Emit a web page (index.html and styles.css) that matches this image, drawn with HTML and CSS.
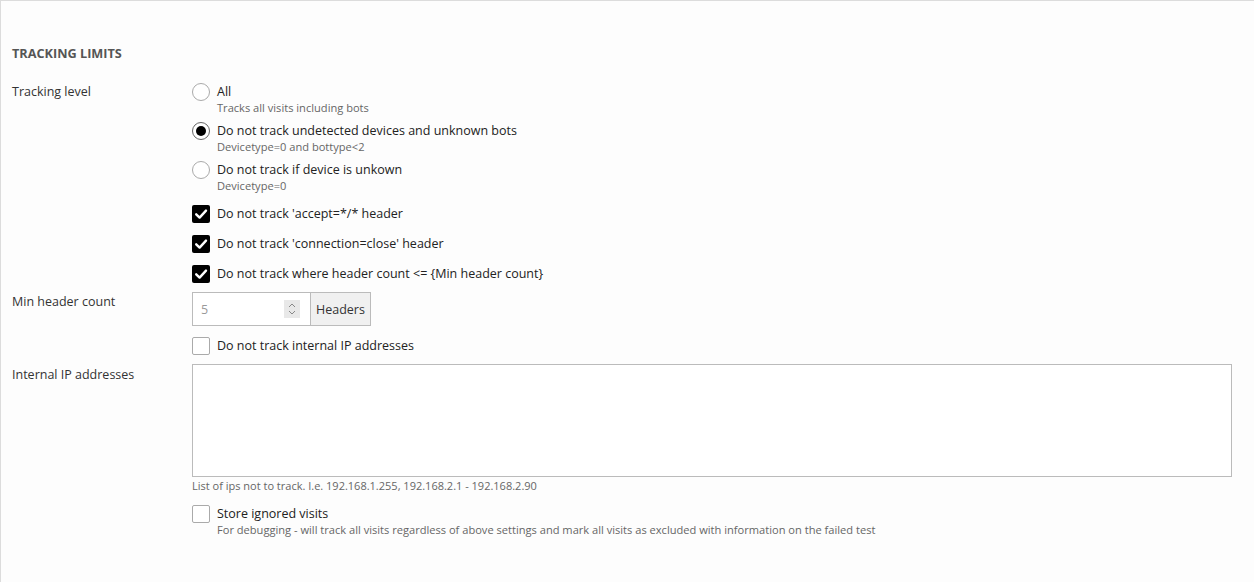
FILE: index.html
```html
<!DOCTYPE html>
<html>
<head>
<meta charset="utf-8">
<link rel="stylesheet" href="styles.css">
</head>
<body>
<div class="panel">
  <h2 class="section-title">TRACKING LIMITS</h2>

  <div class="row">
    <div class="label">Tracking level</div>
    <div class="control">
      <div class="opt radio-opt">
        <span class="radio"></span>
        <div class="opt-text">
          <div class="opt-label">All</div>
          <div class="desc">Tracks all visits including bots</div>
        </div>
      </div>
      <div class="opt radio-opt">
        <span class="radio checked"></span>
        <div class="opt-text">
          <div class="opt-label">Do not track undetected devices and unknown bots</div>
          <div class="desc">Devicetype=0 and bottype&lt;2</div>
        </div>
      </div>
      <div class="opt radio-opt">
        <span class="radio"></span>
        <div class="opt-text">
          <div class="opt-label">Do not track if device is unkown</div>
          <div class="desc">Devicetype=0</div>
        </div>
      </div>
      <div class="opt check-opt first-check">
        <span class="check checked"><svg viewBox="0 0 18 18" width="18" height="18"><path d="M4.2 9.3 L7.6 12.6 L14 5.6" fill="none" stroke="#fff" stroke-width="2.4" stroke-linecap="round" stroke-linejoin="round"/></svg></span>
        <div class="opt-label">Do not track 'accept=*/* header</div>
      </div>
      <div class="opt check-opt">
        <span class="check checked"><svg viewBox="0 0 18 18" width="18" height="18"><path d="M4.2 9.3 L7.6 12.6 L14 5.6" fill="none" stroke="#fff" stroke-width="2.4" stroke-linecap="round" stroke-linejoin="round"/></svg></span>
        <div class="opt-label">Do not track 'connection=close' header</div>
      </div>
      <div class="opt check-opt last-check">
        <span class="check checked"><svg viewBox="0 0 18 18" width="18" height="18"><path d="M4.2 9.3 L7.6 12.6 L14 5.6" fill="none" stroke="#fff" stroke-width="2.4" stroke-linecap="round" stroke-linejoin="round"/></svg></span>
        <div class="opt-label">Do not track where header count &lt;= {Min header count}</div>
      </div>
    </div>
  </div>

  <div class="row row-min">
    <div class="label">Min header count</div>
    <div class="control">
      <div class="input-group">
        <div class="num-input">
          <span class="num-value">5</span>
          <span class="spinner"><svg viewBox="0 0 16 18" width="16" height="18"><path d="M5 7 L8 4 L11 7" fill="none" stroke="#888" stroke-width="1"/><path d="M5 11 L8 14 L11 11" fill="none" stroke="#888" stroke-width="1"/></svg></span>
        </div>
        <div class="addon">Headers</div>
      </div>
      <div class="opt check-opt internal-check">
        <span class="check"></span>
        <div class="opt-label">Do not track internal IP addresses</div>
      </div>
    </div>
  </div>

  <div class="row row-ip">
    <div class="label">Internal IP addresses</div>
    <div class="control">
      <div class="textarea"></div>
      <div class="help">List of ips not to track. I.e. 192.168.1.255, 192.168.2.1 - 192.168.2.90</div>
      <div class="opt check-opt store-check">
        <span class="check"></span>
        <div class="opt-text">
          <div class="opt-label">Store ignored visits</div>
          <div class="desc">For debugging - will track all visits regardless of above settings and mark all visits as excluded with information on the failed test</div>
        </div>
      </div>
    </div>
  </div>
</div>
</body>
</html>
```

FILE: styles.css
```css
html, body {
  margin: 0;
  padding: 0;
  background: #fdfdfd;
}

body {
  font-family: "Open Sans", "Noto Sans", "Liberation Sans", sans-serif;
  font-size: 12.5px;
  color: #333;
}

.panel {
  width: 1254px;
  height: 582px;
  box-sizing: border-box;
  border-top: 1px solid #dcdcdc;
  border-left: 1px solid #dcdcdc;
  padding: 0 22px 0 11px;
}

.section-title {
  margin: 0;
  padding-top: 43px;
  height: 20px;
  line-height: 18px;
  font-size: 12.7px;
  font-weight: 700;
  color: #555;
  margin-bottom: 19px;
}

.row {
  display: grid;
  grid-template-columns: 180px 1fr;
}

.label {
  line-height: 18px;
  color: #333;
}

.control {
  display: flex;
  flex-direction: column;
}

.opt {
  display: flex;
  align-items: flex-start;
  gap: 7px;
}

.opt-label {
  line-height: 18px;
  color: #222;
}

.desc {
  font-size: 11.1px;
  line-height: 14px;
  color: #666;
}

.radio-opt {
  height: 39px;
}

.radio {
  width: 16px;
  height: 16px;
  border: 1px solid #aaa;
  border-radius: 50%;
  background: #fff;
  flex: none;
  position: relative;
}

.radio.checked {
  border-color: #666;
}

.radio.checked::after {
  content: "";
  position: absolute;
  left: 3px;
  top: 3px;
  width: 10px;
  height: 10px;
  border-radius: 50%;
  background: #000;
}

.check-opt {
  height: 30px;
  align-items: flex-start;
}

.first-check {
  margin-top: 5px;
}

.last-check {
  height: 27px;
}

.check {
  width: 16px;
  height: 16px;
  border: 1px solid #aaa;
  border-radius: 2px;
  background: #fff;
  flex: none;
  display: flex;
}

.check.checked {
  width: 18px;
  height: 18px;
  border: none;
  background: #000;
  border-radius: 2px;
}

.check svg {
  display: block;
}

.row-min .label {
  padding-top: 1px;
}

.input-group {
  display: flex;
  height: 34px;
}

.num-input {
  width: 118px;
  box-sizing: border-box;
  height: 34px;
  border: 1px solid #bbb;
  border-right: none;
  background: #fff;
  display: flex;
  align-items: center;
  justify-content: space-between;
  padding: 0 10px 0 8px;
}

.num-value {
  color: #999;
}

.spinner {
  width: 16px;
  height: 18px;
  background: #e8e8e8;
  display: flex;
}

.addon {
  box-sizing: border-box;
  height: 34px;
  border: 1px solid #bbb;
  background: #f0f0f0;
  padding: 0 5px;
  display: flex;
  align-items: center;
  color: #333;
}

.internal-check {
  margin-top: 11px;
  height: 27px;
}

.row-ip .label {
  padding-top: 2px;
}

.textarea {
  height: 113px;
  box-sizing: border-box;
  border: 1px solid #bbb;
  background: #fff;
}

.help {
  font-size: 11px;
  line-height: 14px;
  color: #666;
  margin-top: 2px;
}

.store-check {
  margin-top: 12px;
}
```
